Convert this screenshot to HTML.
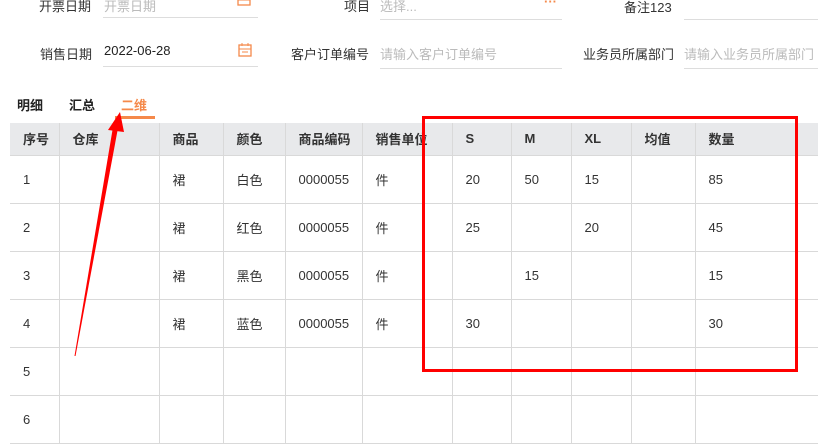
<!DOCTYPE html>
<html><head><meta charset="utf-8"><style>
*{margin:0;padding:0;box-sizing:border-box}
body{width:818px;height:444px;overflow:hidden;background:#fff;font-family:"Liberation Sans","Noto Sans CJK SC",sans-serif;font-size:13px;color:#333;position:relative}
.a{position:absolute;white-space:nowrap}
.lbl{color:#333}
.ph{color:#bbb}
.line{position:absolute;height:1px;background:#ddd}
table{position:absolute;left:10px;top:123px;border-collapse:collapse;table-layout:fixed;width:820px}
td,th{border:1px solid #d9d9d9;height:48px;text-align:left;padding-left:13px;font-size:13px;color:#333;font-weight:normal}
th{height:32px;background:#e8e9eb;font-weight:bold;border-top:none;border-bottom:none}
tr td:first-child,tr th:first-child{border-left:none}
</style></head><body>
<div class="a lbl" style="left:39px;top:-4px">开票日期</div>
<div class="a ph" style="left:104px;top:-4px">开票日期</div>
<div class="line" style="left:103px;top:17px;width:155px"></div>
<svg class="a" style="left:237px;top:-4px" width="14" height="10"><rect x="1" y="0" width="12" height="9" fill="none" stroke="#f5894a" stroke-width="1.3"/><line x1="1" y1="4" x2="13" y2="4" stroke="#f5894a"/></svg>
<div class="a lbl" style="left:344px;top:-4px">项目</div>
<div class="a ph" style="left:380px;top:-4px">选择...</div>
<div class="a" style="left:544px;top:-6px;color:#f5894a;font-weight:bold">···</div>
<div class="line" style="left:380px;top:19px;width:182px"></div>
<div class="a lbl" style="left:624px;top:-3px">备注123</div>
<div class="line" style="left:684px;top:19px;width:134px"></div>

<div class="a lbl" style="left:40px;top:44px">销售日期</div>
<div class="a" style="left:104px;top:43px;color:#222">2022-06-28</div>
<svg class="a" style="left:238px;top:43px" width="14" height="14"><rect x="1" y="2" width="12" height="11" fill="none" stroke="#f5894a" stroke-width="1.3"/><line x1="1" y1="6" x2="13" y2="6" stroke="#f5894a"/><line x1="4" y1="0" x2="4" y2="3" stroke="#f5894a"/><line x1="10" y1="0" x2="10" y2="3" stroke="#f5894a"/><line x1="4" y1="9" x2="10" y2="9" stroke="#f5894a"/></svg>
<div class="line" style="left:103px;top:66px;width:155px"></div>
<div class="a lbl" style="left:291px;top:44px">客户订单编号</div>
<div class="a ph" style="left:380px;top:44px">请输入客户订单编号</div>
<div class="line" style="left:380px;top:68px;width:182px"></div>
<div class="a lbl" style="left:583px;top:44px">业务员所属部门</div>
<div class="a ph" style="left:684px;top:44px">请输入业务员所属部门</div>
<div class="line" style="left:684px;top:68px;width:134px"></div>

<div class="a" style="left:17px;top:95px;font-weight:bold;color:#222">明细</div>
<div class="a" style="left:69px;top:95px;font-weight:bold;color:#222">汇总</div>
<div class="a" style="left:121px;top:95px;font-weight:bold;color:#f5894a">二维</div>
<div class="a" style="left:115px;top:116px;width:40px;height:3px;background:#f5894a"></div>

<table>
<colgroup><col style="width:49px"><col style="width:100px"><col style="width:64px"><col style="width:62px"><col style="width:77px"><col style="width:90px"><col style="width:59px"><col style="width:60px"><col style="width:60px"><col style="width:64px"><col style="width:135px"></colgroup>
<tr><th>序号</th><th>仓库</th><th>商品</th><th>颜色</th><th>商品编码</th><th>销售单位</th><th>S</th><th>M</th><th>XL</th><th>均值</th><th>数量</th></tr>
<tr><td>1</td><td></td><td>裙</td><td>白色</td><td>0000055</td><td>件</td><td>20</td><td>50</td><td>15</td><td></td><td>85</td></tr>
<tr><td>2</td><td></td><td>裙</td><td>红色</td><td>0000055</td><td>件</td><td>25</td><td></td><td>20</td><td></td><td>45</td></tr>
<tr><td>3</td><td></td><td>裙</td><td>黑色</td><td>0000055</td><td>件</td><td></td><td>15</td><td></td><td></td><td>15</td></tr>
<tr><td>4</td><td></td><td>裙</td><td>蓝色</td><td>0000055</td><td>件</td><td>30</td><td></td><td></td><td></td><td>30</td></tr>
<tr><td>5</td><td></td><td></td><td></td><td></td><td></td><td></td><td></td><td></td><td></td><td></td></tr>
<tr><td>6</td><td></td><td></td><td></td><td></td><td></td><td></td><td></td><td></td><td></td><td></td></tr>
</table>

<svg class="a" style="left:0;top:0" width="818" height="444">
<rect x="423.5" y="117.5" width="373" height="253" fill="none" stroke="#f00" stroke-width="3"/>
<polygon points="74.5,356 75.5,356 118,128 113,127" fill="#f00"/>
<polygon points="120,112 108,130 124,132" fill="#f00"/>
</svg>
</body></html>
